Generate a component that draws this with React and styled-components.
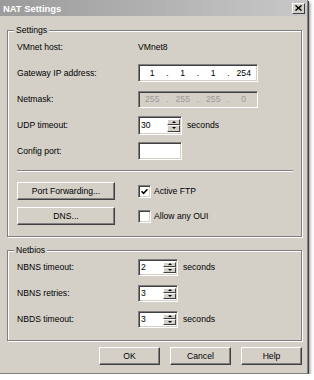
import React from 'react';
import styled, { createGlobalStyle } from 'styled-components';

const face = '#d4d0c8';

const GlobalStyle = createGlobalStyle`
  body {
    margin: 0;
    background: #fff;
    font-family: "Liberation Sans", Arial, sans-serif;
  }
`;

const Window = styled.div`
  width: 308px;
  height: 374px;
  box-sizing: border-box;
  background: ${face};
  border-right: 1px solid #808080;
  border-bottom: 1px solid #808080;
  box-shadow: 1px 1px 0 #404040, 2px 2px 3px rgba(0, 0, 0, 0.45);
  display: flex;
  flex-direction: column;
  font-size: 8.6px;
  color: #000;
`;

const TitleBar = styled.div`
  height: 16px;
  padding: 0 2px 0 3px;
  display: flex;
  align-items: center;
  justify-content: space-between;
  background: linear-gradient(90deg, #9b9b9b, #c8c8c8);
`;

const Title = styled.span`
  color: #fff;
  font-weight: bold;
  font-size: 9.4px;
`;

const CloseButton = styled.div`
  width: 13px;
  height: 11px;
  box-sizing: border-box;
  background: ${face};
  border: 1px solid;
  border-color: #fff #404040 #404040 #fff;
  display: flex;
  align-items: center;
  justify-content: center;
`;

const Body = styled.div`
  flex: 1;
  display: flex;
  flex-direction: column;
  padding: 14px 5px 0 7px;
`;

const Group = styled.div`
  position: relative;
  border: 1px solid #808080;
  box-shadow: inset 1px 1px #fff, 1px 1px #fff;
  padding: ${p => p.$pad};
  margin-top: ${p => p.$top || 0}px;
`;

const Caption = styled.span`
  position: absolute;
  top: -7px;
  left: 6px;
  padding: 0 2px;
  line-height: 12px;
  background: ${face};
`;

const FormGrid = styled.div`
  display: grid;
  grid-template-columns: 121px 1fr;
  grid-auto-rows: 26px;
  align-items: center;
`;

const Field = styled.div`
  display: flex;
  align-items: center;
`;

const Sunken = styled.div`
  box-sizing: border-box;
  width: ${p => p.$w}px;
  height: ${p => p.$h}px;
  background: ${p => (p.$disabled ? face : '#fff')};
  color: ${p => (p.$disabled ? '#9a9a9a' : '#000')};
  border: 1px solid;
  border-color: #808080 #fff #fff #808080;
  box-shadow: inset 1px 1px #404040, inset -1px -1px ${face};
  display: flex;
  align-items: center;
`;

const Octet = styled.span`
  flex: 1;
  text-align: center;
`;

const Dot = styled.span`
  width: 4px;
  text-align: center;
`;

const SpinText = styled.span`
  flex: 1;
  padding-left: 2px;
`;

const Spinner = styled.div`
  align-self: stretch;
  width: 13px;
  margin: 2px 1px 2px 0;
  display: flex;
  flex-direction: column;
`;

const SpinButton = styled.div`
  flex: 1;
  background: ${face};
  border: 1px solid;
  border-color: #fff #404040 #404040 #fff;
  display: flex;
  align-items: center;
  justify-content: center;

  &::after {
    content: '';
    border-left: 2px solid transparent;
    border-right: 2px solid transparent;
    ${p => (p.$down ? 'border-top: 2px solid #000;' : 'border-bottom: 2px solid #000;')}
  }
`;

const Unit = styled.span`
  margin-left: 5px;
`;

const Separator = styled.div`
  margin: 6px 0 10px;
  border-top: 1px solid #808080;
  border-bottom: 1px solid #fff;
`;

const ActionGrid = styled.div`
  display: grid;
  grid-template-columns: 121px 1fr;
  row-gap: 7px;
  align-items: center;
`;

const Button = styled.button`
  width: ${p => p.$w}px;
  height: 18px;
  padding: 0;
  font: inherit;
  color: #000;
  background: ${face};
  border: 1px solid;
  border-color: #fff #404040 #404040 #fff;
  box-shadow: inset -1px -1px #808080, inset 1px 1px ${face};
`;

const Check = styled.label`
  display: flex;
  align-items: center;
  gap: 3px;
`;

const Box = styled.span`
  box-sizing: border-box;
  width: 13px;
  height: 13px;
  background: #fff;
  border: 1px solid;
  border-color: #808080 #fff #fff #808080;
  box-shadow: inset 1px 1px #404040, inset -1px -1px ${face};
  display: flex;
  align-items: center;
  justify-content: center;
`;

const Footer = styled.div`
  display: flex;
  justify-content: flex-end;
  gap: 10px;
  margin-top: 6px;
`;

function IpField({ values, disabled }) {
  return (
    <Sunken $w={120} $h={disabled ? 17 : 18} $disabled={disabled}>
      {values.map((v, i) => (
        <React.Fragment key={i}>
          {i > 0 && <Dot>.</Dot>}
          <Octet>{v}</Octet>
        </React.Fragment>
      ))}
    </Sunken>
  );
}

function SpinBox({ value, w, h }) {
  return (
    <Sunken $w={w} $h={h}>
      <SpinText>{value}</SpinText>
      <Spinner>
        <SpinButton />
        <SpinButton $down />
      </Spinner>
    </Sunken>
  );
}

function CheckBox({ checked, label }) {
  return (
    <Check>
      <Box>
        {checked && (
          <svg width="7" height="7" viewBox="0 0 7 7">
            <path d="M0.5 3.2 L2.6 5.3 L6.5 1.2" fill="none" stroke="#000" strokeWidth="1.6" />
          </svg>
        )}
      </Box>
      {label}
    </Check>
  );
}

export default function App() {
  return (
    <>
      <GlobalStyle />
      <Window>
        <TitleBar>
          <Title>NAT Settings</Title>
          <CloseButton>
            <svg width="7" height="6" viewBox="0 0 7 6">
              <path d="M0.5 0.5 L6.5 5.5 M6.5 0.5 L0.5 5.5" stroke="#000" strokeWidth="1.5" />
            </svg>
          </CloseButton>
        </TitleBar>
        <Body>
          <Group $pad="3px 8px 11px 9px">
            <Caption>Settings</Caption>
            <FormGrid>
              <span>VMnet host:</span>
              <span>VMnet8</span>
              <span>Gateway IP address:</span>
              <IpField values={['1', '1', '1', '254']} />
              <span>Netmask:</span>
              <IpField values={['255', '255', '255', '0']} disabled />
              <span>UDP timeout:</span>
              <Field>
                <SpinBox value="30" w={44} h={19} />
                <Unit>seconds</Unit>
              </Field>
              <span>Config port:</span>
              <Sunken $w={44} $h={18} />
            </FormGrid>
            <Separator />
            <ActionGrid>
              <Button $w={98}>Port Forwarding...</Button>
              <CheckBox checked label="Active FTP" />
              <Button $w={98}>DNS...</Button>
              <CheckBox label="Allow any OUI" />
            </ActionGrid>
          </Group>
          <Group $pad="3px 8px 8px 9px" $top={13}>
            <Caption>Netbios</Caption>
            <FormGrid>
              <span>NBNS timeout:</span>
              <Field>
                <SpinBox value="2" w={40} h={17} />
                <Unit>seconds</Unit>
              </Field>
              <span>NBNS retries:</span>
              <SpinBox value="3" w={40} h={17} />
              <span>NBDS timeout:</span>
              <Field>
                <SpinBox value="3" w={40} h={17} />
                <Unit>seconds</Unit>
              </Field>
            </FormGrid>
          </Group>
          <Footer>
            <Button $w={61}>OK</Button>
            <Button $w={61}>Cancel</Button>
            <Button $w={61}>Help</Button>
          </Footer>
        </Body>
      </Window>
    </>
  );
}
